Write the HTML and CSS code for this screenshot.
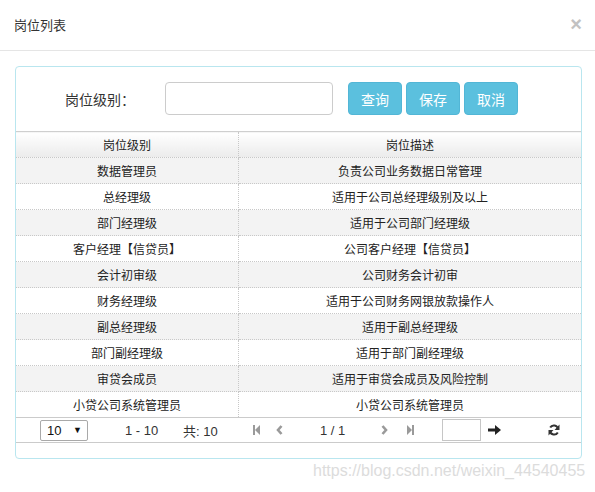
FILE: index.html
```html
<!DOCTYPE html>
<html lang="zh-CN">
<head>
<meta charset="utf-8">
<title>岗位列表</title>
<link rel="stylesheet" href="styles.css">
</head>
<body>
<div class="modal">
  <div class="modal-header">
    <span class="title">岗位列表</span>
    <span class="close">×</span>
  </div>
  <div class="modal-body">
    <div class="panel">
      <div class="search">
        <label class="label">岗位级别：</label>
        <input class="input" type="text">
        <button class="btn btn-first">查询</button>
        <button class="btn">保存</button>
        <button class="btn">取消</button>
      </div>
      <table class="grid">
        <thead>
          <tr><th class="c1">岗位级别</th><th class="c2">岗位描述</th></tr>
        </thead>
        <tbody>
          <tr class="alt"><td class="c1">数据管理员</td><td class="c2">负责公司业务数据日常管理</td></tr>
          <tr><td class="c1">总经理级</td><td class="c2">适用于公司总经理级别及以上</td></tr>
          <tr class="alt"><td class="c1">部门经理级</td><td class="c2">适用于公司部门经理级</td></tr>
          <tr><td class="c1">客户经理【信贷员】</td><td class="c2">公司客户经理【信贷员】</td></tr>
          <tr class="alt"><td class="c1">会计初审级</td><td class="c2">公司财务会计初审</td></tr>
          <tr><td class="c1">财务经理级</td><td class="c2">适用于公司财务网银放款操作人</td></tr>
          <tr class="alt"><td class="c1">副总经理级</td><td class="c2">适用于副总经理级</td></tr>
          <tr><td class="c1">部门副经理级</td><td class="c2">适用于部门副经理级</td></tr>
          <tr class="alt"><td class="c1">审贷会成员</td><td class="c2">适用于审贷会成员及风险控制</td></tr>
          <tr class="last"><td class="c1">小贷公司系统管理员</td><td class="c2">小贷公司系统管理员</td></tr>
        </tbody>
      </table>
      <div class="pager">
        <div class="select"><span>10</span><span class="caret">▼</span></div>
        <span class="range">1 - 10</span>
        <span class="total">共: 10</span>
        <svg class="ico i-first" width="7" height="10" viewBox="0 0 7 10"><rect x="0" y="0" width="2" height="10" fill="#9a9a9a"/><polygon points="7,0 2,5 7,10" fill="#9a9a9a"/></svg>
        <svg class="ico i-prev" width="7" height="10" viewBox="0 0 7 10"><polyline points="5.5,1 2,5 5.5,9" stroke="#9a9a9a" stroke-width="2.6" fill="none"/></svg>
        <span class="page">1 / 1</span>
        <svg class="ico i-next" width="7" height="10" viewBox="0 0 7 10"><polyline points="1.5,1 5,5 1.5,9" stroke="#9a9a9a" stroke-width="2.6" fill="none"/></svg>
        <svg class="ico i-last" width="7" height="10" viewBox="0 0 7 10"><polygon points="0,0 5,5 0,10" fill="#9a9a9a"/><rect x="5" y="0" width="2" height="10" fill="#9a9a9a"/></svg>
        <input class="goto" type="text">
        <svg class="ico i-go" width="13" height="10" viewBox="0 0 13 10"><rect x="0" y="3.5" width="8" height="3" fill="#222"/><polygon points="7,0 13,5 7,10" fill="#222"/></svg>
        <svg class="ico i-refresh" width="12" height="12" viewBox="0 0 12 12"><path d="M10 5 A4.2 4.2 0 0 0 2.2 3.6" stroke="#333" stroke-width="2" fill="none"/><polygon points="11.5,0.5 11.5,6 6.5,6" fill="#333"/><path d="M2 7 A4.2 4.2 0 0 0 9.8 8.4" stroke="#333" stroke-width="2" fill="none"/><polygon points="0.5,11.5 0.5,6 5.5,6" fill="#333"/></svg>
      </div>
    </div>
  </div>
  <div class="watermark">https://blog.csdn.net/weixin_44540455</div>
</div>
</body>
</html>
```

FILE: styles.css
```css
html, body {
  margin: 0;
  padding: 0;
  background: #fff;
}
body {
  font-family: "Liberation Sans", "Noto Sans CJK SC", sans-serif;
  color: #333;
}
.modal-header {
  height: 50px;
  border-bottom: 1px solid #e5e5e5;
  display: flex;
  align-items: center;
  justify-content: space-between;
  padding: 0 13px 0 14px;
}
.title {
  font-size: 13px;
  color: #333;
  margin-top: -1px;
}
.close {
  font-size: 20px;
  font-weight: bold;
  color: #c2c2c2;
  line-height: 1;
  margin-top: -3px;
}
.modal-body {
  padding: 15px 13px 0 15px;
}
.panel {
  border: 1px solid #b9e6ef;
  border-radius: 4px;
  height: 393px;
  box-sizing: border-box;
}
.search {
  display: flex;
  align-items: center;
  padding: 15px 0 16px 49px;
  height: 33px;
}
.label {
  width: 100px;
  font-size: 14px;
  color: #333;
}
.input {
  width: 168px;
  height: 33px;
  box-sizing: border-box;
  border: 1px solid #ccc;
  border-radius: 4px;
  margin: 0;
  padding: 0 6px;
  background: #fff;
}
.btn {
  width: 54px;
  height: 33px;
  margin: 0 0 0 4px;
  padding: 0;
  background: #5bc0de;
  border: 1px solid #52b6d6;
  border-radius: 4px;
  color: #fff;
  font-family: "Liberation Sans", "Noto Sans CJK SC", sans-serif;
  font-size: 14px;
}
.btn-first {
  margin-left: 15px;
}
.grid {
  width: 100%;
  border-collapse: collapse;
  table-layout: fixed;
  font-size: 12px;
  color: #222;
}
.grid th, .grid td {
  height: 25px;
  padding: 0;
  text-align: center;
  font-weight: normal;
  border-bottom: 1px dotted #c8c8c8;
  box-sizing: content-box;
}
.grid .c1 {
  width: 222px;
  border-right: 1px dotted #c8c8c8;
}
.grid thead th {
  border-top: 1px solid #cfcfcf;
  background: linear-gradient(#ffffff, #ebebeb);
}
.grid tr.alt td {
  background: #f3f3f3;
}
.grid tr.last td {
  border-bottom: none;
}
.pager {
  display: flex;
  align-items: center;
  height: 24px;
  border-top: 1px solid #cbcbcb;
  border-bottom: 1px solid #cbcbcb;
  font-size: 13px;
  color: #333;
}
.select {
  margin-left: 24px;
  width: 48px;
  height: 21px;
  box-sizing: border-box;
  border: 1px solid #a9a9a9;
  border-radius: 2px;
  display: flex;
  align-items: center;
  justify-content: space-between;
  padding: 0 5px 0 6px;
  font-size: 13px;
  color: #111;
}
.caret {
  font-size: 9px;
  color: #111;
}
.range {
  margin-left: 37px;
  width: 40px;
}
.total {
  margin-left: 18px;
  width: 45px;
}
.ico {
  display: block;
  flex: none;
}
.i-first { margin-left: 25px; }
.i-prev { margin-left: 16px; }
.page {
  margin-left: 37px;
  width: 30px;
}
.i-next { margin-left: 31px; }
.i-last { margin-left: 19px; }
.goto {
  margin: 0 0 0 28px;
  width: 39px;
  height: 22px;
  box-sizing: border-box;
  border: 1px solid #c6c6c6;
  padding: 0;
}
.i-go { margin-left: 7px; }
.i-refresh { margin-left: 47px; }
.watermark {
  margin: 3px 0 0 313px;
  font-family: "Liberation Sans", sans-serif;
  font-size: 16px;
  line-height: 18px;
  color: #dcdcdc;
}
```
